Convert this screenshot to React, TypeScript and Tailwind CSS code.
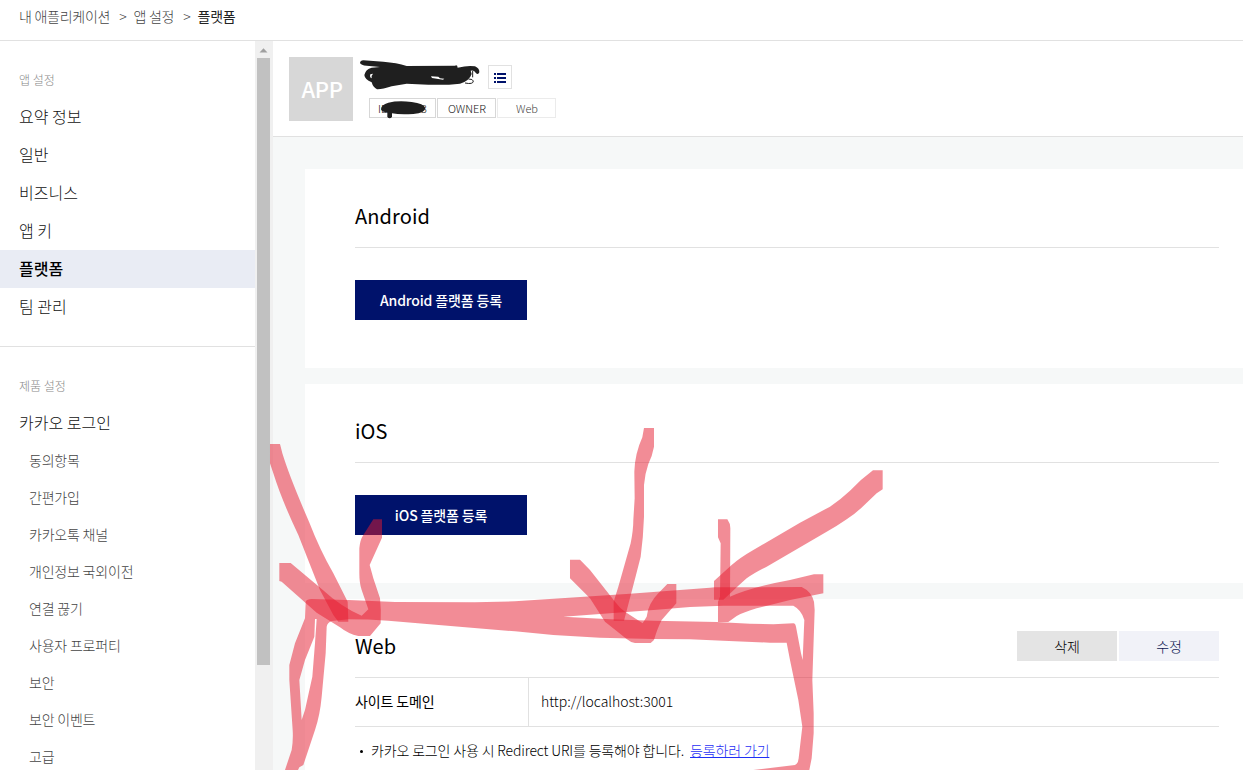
const menu = ['요약 정보', '일반', '비즈니스', '앱 키', '플랫폼', '팀 관리'];
const subMenu = ['동의항목', '간편가입', '카카오톡 채널', '개인정보 국외이전', '연결 끊기', '사용자 프로퍼티', '보안', '보안 이벤트', '고급'];

function Sidebar() {
  return (
    <aside className="flex h-full w-[273px] shrink-0 overflow-hidden">
      <nav className="w-[255px] shrink-0">
        <section className="h-[306px] border-b border-[#e1e1e1] pt-[29px]">
          <h2 className="h-[28px] pl-[19px] text-xs leading-[20px] font-light text-[#888]">앱 설정</h2>
          <ul>
            {menu.map((m) => (
              <li key={m} className={m === '플랫폼' ? 'h-[38px] bg-[#e9ecf4] pl-[19px] text-base leading-[36px] font-medium text-black' : 'h-[38px] pl-[19px] text-base leading-[36px] font-light text-[#111]'}>{m}</li>
            ))}
          </ul>
        </section>
        <section className="pt-[29px]">
          <h2 className="h-[28px] pl-[19px] text-xs leading-[20px] font-light text-[#888]">제품 설정</h2>
          <div className="h-[38px] pl-[19px] text-base leading-[36px] font-light text-[#111]">카카오 로그인</div>
          <ul>
            {subMenu.map((m) => (
              <li key={m} className="h-[37px] pl-[29px] text-sm leading-[36px] font-light tracking-[-0.2px] text-[#444]">{m}</li>
            ))}
          </ul>
        </section>
      </nav>
      <div className="flex w-[18px] flex-col bg-[#f0f0f0] pl-[2px]">
        <svg className="h-[17px] w-[13px]" viewBox="0 0 13 17"><path d="M2.5 11.5L6.5 7.2L10.5 11.5Z" fill="#a0a0a0" /></svg>
        <div className="h-[607px] w-[13px] bg-[#c1c1c1]" />
      </div>
    </aside>
  );
}

function AppHeader() {
  return (
    <header className="flex h-[96px] shrink-0 border-b border-[#e1e1e1] bg-white pt-4 pl-4">
      <div className="flex h-16 w-16 items-center justify-center bg-[#d7d7d7] pb-px pl-[2px] text-[22px] font-medium tracking-[-0.4px] text-white"><span>APP</span></div>
      <div className="ml-4">
        <div className="flex h-[41px] pt-2">
          <div className="w-[119px]" />
          <button className="flex h-6 w-6 items-center justify-center border border-[#e1e1e1] pt-[2px]">
            <svg width="12" height="10" viewBox="0 0 12 10" fill="#00126b" shapeRendering="crispEdges">
              <path d="M0 0h2v2H0zM3 0h9v2H3zM0 4h2v2H0zM3 4h9v2H3zM0 8h2v2H0zM3 8h9v2H3z" />
            </svg>
          </button>
        </div>
        <div className="flex gap-px text-[11px] leading-[18px] font-light text-[#111]">
          <div className="flex h-5 w-[67px] justify-between border border-[#d7d7d7] pr-[8px] pl-[8px]"><span>ID</span><span>3</span></div>
          <div className="h-5 w-[59px] border border-[#d7d7d7] pl-px text-center">OWNER</div>
          <div className="h-5 w-[59px] border border-[#ebebeb] pl-px text-center text-[#444]">Web</div>
        </div>
      </div>
    </header>
  );
}

function PlatformCard({ name }: { name: string }) {
  return (
    <section className="mb-4 h-[199px] shrink-0 bg-white pt-[32px] pr-6 pl-[50px]">
      <h3 className="h-[47px] border-b border-[#e1e1e1] text-[20px] leading-[30px] font-normal tracking-[0.1px] text-black">{name}</h3>
      <button className="mt-8 h-10 w-[172px] bg-[#00126b] text-sm font-medium tracking-[-0.15px] text-white">{name} 플랫폼 등록</button>
    </section>
  );
}

function WebCard() {
  return (
    <section className="h-[200px] shrink-0 bg-white pt-8 pr-6 pl-[50px]">
      <div className="flex h-[47px] border-b border-[#e1e1e1]">
        <h3 className="flex-1 text-[20px] leading-[30px] font-normal text-black">Web</h3>
        <button className="mr-[2px] h-[30px] w-[100px] bg-[#e4e4e4] text-[14px] font-light tracking-[-0.2px] text-black">삭제</button>
        <button className="h-[30px] w-[100px] bg-[#f1f2f8] text-[14px] font-light tracking-[-0.2px] text-[#0a1450]">수정</button>
      </div>
      <div className="flex h-[49px] border-b border-[#e1e1e1] text-sm leading-[46px]">
        <div className="w-[174px] border-r border-[#e1e1e1] font-normal tracking-[-0.15px] text-black">사이트 도메인</div>
        <div className="pl-3 font-light text-black">http://localhost:3001</div>
      </div>
      <p className="flex items-center text-sm leading-[46px] font-light tracking-[-0.15px] text-black">
        <span className="mt-[2px] mr-[8px] ml-[5px] h-[3px] w-[3px] rounded-full bg-black" />
        카카오 로그인 사용 시 Redirect URI를 등록해야 합니다.
        <a className="ml-[6px] text-[#1f30f5] underline">등록하러 가기</a>
      </p>
    </section>
  );
}

function Annotations() {
  return (
    <svg className="pointer-events-none absolute inset-0" width="1243" height="770" viewBox="0 0 1243 770">
      <g transform="translate(355 55) scale(.33333)" fill="#1f1f1f" fillRule="evenodd">
        <path d="M15 24Q16 16 25 16L85 20Q125 23 155 33L300 32Q307 28 308 38Q340 30 360 34Q374 40 373 52Q369 61 362 53Q357 45 347 47L350 57Q343 78 315 86Q270 91 220 89L155 86L110 94Q80 104 66 103Q54 97 50 82Q29 73 28 60Q32 42 50 38L75 36L35 32Q18 31 15 24ZM46 58Q43 67 50 70Q48 62 54 56ZM228 64L250 65L255 70L268 71L264 74L231 69Z" />
        <path d="M353 48V67M330 84Q355 89 355 78Q354 72 340 72" fill="none" stroke="#1f1f1f" strokeWidth="3" />
      </g>
      <g transform="translate(270 40) scale(.33333)" fill="#1f1f1f">
        <path d="M333 208Q333 194 355 188Q385 181 425 186Q462 190 466 204Q466 219 430 222Q390 225 366 220L366 231Q359 239 352 231L352 218Q335 216 333 208Z" />
      </g>
      <g transform="translate(255 420) scale(.33333)" fill="#e6192d" fillOpacity=".5" fillRule="evenodd">
        <path d="M45 72L75 72L82 100Q105 175 162 305Q195 390 235 460L278 545L280 605L250 605L235 585L195 510L130 345Q80 240 55 160L45 130Z" />
        <path d="M73 429L107 429L200 507Q260 562 320 587L340 568L320 510Q313 490 313 460L313 385Q315 360 325 345L355 298L381 298L381 353L344 435L355 475L375 535Q379 570 377 610L345 648L310 648Q280 642 255 622L185 578L80 485L73 483Z" />
        <path d="M152 545Q155 537 170 537L280 540L420 546L660 547L780 544L965 532L1125 521L1365 503L1380 502L1640 501Q1670 515 1677 545L1679 570L1675 690L1672 780L1676 880L1676 940L1670 1015L1663 1050L1495 1050L1620 1035Q1630 1030 1631 1015L1635 980L1642 920L1630 840L1605 720L1595 668L1545 668L1405 662L1305 658L1195 657L1035 653L895 645L780 634L400 602Q340 598 280 598L230 603Q217 608 215 620L212 700L200 830Q195 885 180 930L145 1035L133 1042L129 1050L90 1050L110 990Q115 960 113 930L103 780L103 735L120 670L150 595ZM180 597L178 650L150 720L133 780L140 900L150 870L172 770L180 670L185 597ZM1305 561L1405 557L1615 557Q1640 570 1648 600L1643 720L1638 700L1623 620Q1621 610 1615 610L1555 613L1485 611L1385 606L1195 602L1065 598L925 590L1065 580L1205 569Z" />
      </g>
      <g transform="translate(510 420) scale(.33333)" fill="#e6192d" fillOpacity=".5">
        <path d="M402 24L432 24L432 80L425 108L415 132Q405 160 402 195L402 290Q400 350 392 410L378 465L342 602L311 602L311 545L325 500L362 370Q370 330 370 300L374 235L373 155Q375 100 397 52Z" />
        <path d="M180 419L210 419L240 450L315 545Q330 565 345 575L398 610L410 590Q415 550 445 520L472 492L499 492L499 550L455 600Q442 625 432 660L422 669L375 669Q360 666 350 657L285 605L240 535L180 475Z" />
      </g>
      <g transform="translate(690 450) scale(.33333)" fill="#e6192d" fillOpacity=".5">
        <path d="M549 61L578 61L578 118L560 130L520 168Q495 192 470 208Q440 229 410 245L230 350Q190 370 170 385L145 407L100 449L72 449L72 393L125 345Q150 323 190 300L330 218L420 170Q450 150 480 122Q510 90 549 61Z" />
        <path d="M84 208L112 208Q121 220 121 235L120 440Q190 410 300 390L372 373L400 373L400 430L300 450L200 475Q160 487 140 498L115 516L84 516L84 455L90 440L92 280L84 262Z" />
      </g>
    </svg>
  );
}

export default function App() {
  return (
    <div className="relative flex h-[770px] w-[1243px] flex-col overflow-hidden bg-white font-['Noto_Sans_CJK_KR','Noto_Sans',sans-serif]">
      <div className="flex h-[41px] shrink-0 border-b border-[#e1e1e1] pl-[19px] text-[14px] leading-[33px] font-light tracking-[-0.25px] text-[#444]">
        <span>내 애플리케이션</span>
        <span className="mr-[7px] ml-[9px]">&gt;</span>
        <span>앱 설정</span>
        <span className="mr-[7px] ml-[9px]">&gt;</span>
        <span className="font-normal text-[#222]">플랫폼</span>
      </div>
      <div className="flex min-h-0 flex-1">
        <Sidebar />
        <main className="flex min-w-0 flex-1 flex-col overflow-hidden bg-[#f6f8f8]">
          <AppHeader />
          <div className="flex flex-col pt-8 pl-8">
            <PlatformCard name="Android" />
            <PlatformCard name="iOS" />
            <WebCard />
          </div>
        </main>
      </div>
      <Annotations />
    </div>
  );
}
